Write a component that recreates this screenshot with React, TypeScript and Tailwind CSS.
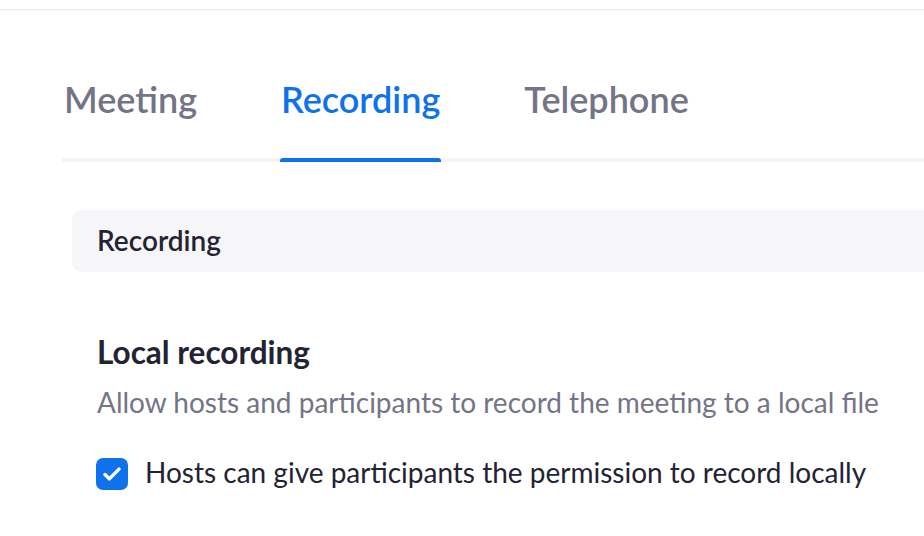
const tabs = ["Meeting", "Recording", "Telephone"];

export default function App() {
  const active = "Recording";

  return (
    <div
      className="h-[536px] w-[924px] overflow-hidden bg-white"
      style={{ fontFamily: "Lato, 'Noto Sans', sans-serif" }}
    >
      <div className="h-[10px] border-b border-[#ececef] shadow-[0_1px_2px_rgba(0,0,0,0.04)]" />

      <div className="ml-[62px] flex gap-[82px] border-b-4 border-[#f6f6f8] pl-px">
        {tabs.map((tab) => (
          <div key={tab} className="relative -mb-1 px-px pt-[68px] pb-[41px]">
            <span
              className={
                "block text-[36px] leading-[1.2] font-semibold " +
                (tab === active ? "text-[#0e72ed]" : "text-[#747487]")
              }
            >
              {tab}
            </span>
            {tab === active ? (
              <div className="absolute inset-x-0 bottom-0 h-1 rounded-t-[3px] bg-[#0e72ed]" />
            ) : null}
          </div>
        ))}
      </div>

      <div className="ml-[72px] mt-[48px] flex h-[62px] items-center rounded-l-[10px] bg-[#f6f6f8] px-[25px]">
        <h2 className="text-[28px] leading-[1.2] font-semibold text-[#232333]">Recording</h2>
      </div>

      <div className="ml-[97px] mt-[62px]">
        <h3 className="text-[31.5px] leading-[1.2] font-bold text-[#232333]">Local recording</h3>
        <p className="mt-[14px] text-[28px] leading-[1.2] text-[#747487]">
          Allow hosts and participants to record the meeting to a local file
        </p>
        <label className="-ml-px mt-[36px] flex items-start gap-[17px]">
          <span className="mt-[2px] flex h-[32px] w-[32px] shrink-0 items-center justify-center rounded-[7px] bg-[#0e72ed]">
            <svg viewBox="0 0 24 24" className="h-[26px] w-[26px]" fill="none">
              <path
                d="M5.5 12.5l4 4L18.5 7.5"
                stroke="white"
                strokeWidth="3.2"
                strokeLinecap="round"
                strokeLinejoin="round"
              />
            </svg>
          </span>
          <span className="text-[28px] leading-[1.2] text-[#232333]">
            Hosts can give participants the permission to record locally
          </span>
        </label>
      </div>
    </div>
  );
}
